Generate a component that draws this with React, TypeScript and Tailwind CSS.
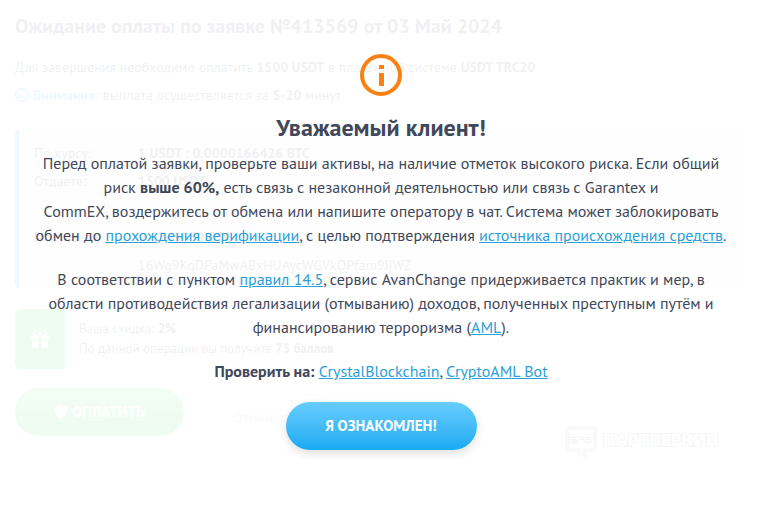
import React from 'react';

const InfoIcon: React.FC<{ className?: string; stroke?: number }> = ({ className, stroke = 4 }) => (
    <svg viewBox="0 0 42 42" className={className} fill="none" aria-hidden="true">
        <circle cx="21" cy="21" r="19" stroke="currentColor" strokeWidth={stroke} />
        <path d="M19 11h5v4h-5zM19 19h5v13h-5z" fill="currentColor" />
    </svg>
);

const GiftIcon: React.FC = () => (
    <svg viewBox="0 0 20 20" className="w-5 h-5" fill="currentColor" aria-hidden="true">
        <path d="M1 6h8v4H1zM11 6h8v4h-8zM2 11h7v8H3a1 1 0 0 1-1-1zM11 11h7v7a1 1 0 0 1-1 1h-6z" />
        <path d="M10 6C8 2 7 1.500 5.500 1.500S3.500 4 5 6M10 6c2-4 3-4.500 4.500-4.500S16.500 4 15 6" fill="none" stroke="currentColor" strokeWidth="1.500" />
    </svg>
);

const ShieldIcon: React.FC = () => (
    <svg viewBox="0 0 14 14" className="w-3.5 h-3.5" fill="currentColor" aria-hidden="true">
        <path d="M7 0c2 1.600 4 2 6 2 .8 5-1.200 9.500-6 12C2.200 11.500.2 7 1 2c2 0 4-.4 6-2z" />
    </svg>
);

const Watermark: React.FC = () => (
    <div className="absolute right-[50px] top-[426px] flex items-start gap-1.5">
        <svg viewBox="0 0 32 34" className="w-8 h-[34px]" fill="none" stroke="#f1f1f1" strokeWidth="0.8" aria-hidden="true">
            <path d="M3.500 1h25A2.500 2.500 0 0 1 31 3.500v19a2.500 2.500 0 0 1-2.500 2.500H21v6.500c0 1.500-1.500 2-2.500 1L12 25H3.500A2.500 2.500 0 0 1 1 22.500v-19A2.500 2.500 0 0 1 3.500 1z" />
            <path d="M4.500 3h23A1.500 1.500 0 0 1 29 4.500v17a1.500 1.500 0 0 1-1.500 1.500H19v7l-6-7H4.500A1.500 1.500 0 0 1 3 21.500v-17A1.500 1.500 0 0 1 4.500 3z" />
            <path d="M4 11.500h23v2.500a3 3 0 0 1-3 3h-2a3 3 0 0 1-3-3v-.5h-6v.5a3 3 0 0 1-3 3H8a3 3 0 0 1-3-3v-1H4z" />
            <path d="M7 13.500h4c0 1-.5 2-2 2s-2-1-2-2zM21 13.500h4c0 1-.5 2-2 2s-2-1-2-2z" />
        </svg>
        <span className="mt-1 text-base leading-5 font-black text-white [-webkit-text-stroke:1px_#f1f1f1] [paint-order:stroke_fill] font-['Inter',sans-serif]">
            ПАРТНЕРКИН
        </span>
    </div>
);

const rates = [
    { label: 'По курсу:', value: '1 USDT : 0.0000166426 BTC', bold: true },
    { label: 'Отдаете:', value: '1500 USDT', bold: true },
    { label: '', value: '', bold: false },
    { label: 'Получаете:', value: '0.0249639 BTC', bold: true },
    { label: '', value: '16Wg9KqDPaMwABxHUAycWGVkQPfam9JjWZ', bold: false },
];

const OrderPage: React.FC = () => (
    <div className="px-[15px] pt-3 whitespace-nowrap text-sm">
        <h1 className="text-xl leading-7 font-bold">Ожидание оплаты по заявке №413569 от 03 Май 2024</h1>
        <p className="mt-[13px] leading-7">
            Для завершения необходимо оплатить <b>1500 USDT</b> в платежной системе <b>USDT TRC20</b>
        </p>
        <p className="flex items-center gap-1 leading-7">
            <InfoIcon className="w-3.5 h-3.5 text-[#12aef5]" stroke={5} />
            <span>
                <b className="text-[#12aef5]">Внимание:</b> выплата осуществляется за <b>5-20</b> минут.
            </span>
        </p>

        <dl className="mt-5 mr-2 h-40 pt-2.5 pl-[15px] grid grid-cols-[104px_1fr] auto-rows-[28px] leading-7 rounded-md border-l-4 border-[#12aef5] bg-[#f0f0f2]">
            {rates.map((r, i) => (
                <React.Fragment key={i}>
                    <dt>{r.label}</dt>
                    <dd className={r.bold ? 'font-bold' : ''}>{r.value}</dd>
                </React.Fragment>
            ))}
        </dl>

        <div className="mt-5 mr-2 flex rounded-md overflow-hidden">
            <div className="w-[50px] h-[60px] flex items-center justify-center bg-[#2cd34a] text-white">
                <GiftIcon />
            </div>
            <div className="pl-3.5 pt-2.5 text-[13px] leading-5">
                <p>Ваша скидка: <b>2%</b></p>
                <p>По данной операции вы получите <b>75 баллов</b></p>
            </div>
        </div>

        <div className="mt-[19px] flex items-end gap-2">
            <button type="button" tabIndex={-1} className="w-[169px] h-12 flex items-center justify-center gap-1 rounded-full bg-linear-to-b from-[#5fe27a] to-[#2cd34a] text-white text-[15px] font-bold">
                <ShieldIcon />
                ОПЛАТИТЬ
            </button>
            <button type="button" tabIndex={-1} className="w-[142px] h-[42px] pt-1 rounded-full border border-[#e4e5e8] text-[#b9bcc4] text-sm font-bold">
                Отменить
            </button>
        </div>
    </div>
);

const TextLink: React.FC<{ children: React.ReactNode }> = ({ children }) => (
    <a href="#" className="text-[#2b9fd9] underline">{children}</a>
);

const Notice: React.FC = () => (
    <div role="dialog" aria-labelledby="notice-title" className="absolute inset-0 bg-white/92 pt-[54px] pr-1.5 flex flex-col items-center text-center text-base leading-6">
        <InfoIcon className="w-[42px] h-[42px] shrink-0 text-[#f98012]" />
        <h2 id="notice-title" className="mt-4 mb-[7px] text-2xl leading-8 font-bold">Уважаемый клиент!</h2>
        <p className="px-5">
            Перед оплатой заявки, проверьте ваши активы, на наличие отметок высокого риска. Если общий<br />
            риск <b>выше 60%,</b> есть связь с незаконной деятельностью или связь с Garantex и<br />
            CommEX, воздержитесь от обмена или напишите оператору в чат. Система может заблокировать<br />
            обмен до <TextLink>прохождения верификации</TextLink>, с целью подтверждения{' '}
            <TextLink>источника происхождения средств</TextLink>.
        </p>
        <p className="mt-5 px-5">
            В соответствии с пунктом <TextLink>правил 14.5</TextLink>, сервис AvanChange придерживается практик и мер, в<br />
            области противодействия легализации (отмыванию) доходов, полученных преступным путём и<br />
            финансированию терроризма (<TextLink>AML</TextLink>).
        </p>
        <p className="mt-5">
            <b>Проверить на:</b> <TextLink>CrystalBlockchain</TextLink>, <TextLink>CryptoAML Bot</TextLink>
        </p>
        <button type="button" className="mt-[19px] h-12 w-[191px] shrink-0 rounded-full bg-linear-to-b from-[#66cdfd] to-[#12aaf2] text-white text-[15px] font-bold shadow-[0_4px_10px_rgba(0,0,0,0.12)]">
            Я ОЗНАКОМЛЕН!
        </button>
    </div>
);

export default function App() {
    return (
        <main className="relative min-h-screen bg-white overflow-hidden text-[#414859] font-['PT_Sans','Lato',sans-serif]">
            <OrderPage />
            <Notice />
            <Watermark />
        </main>
    );
}
